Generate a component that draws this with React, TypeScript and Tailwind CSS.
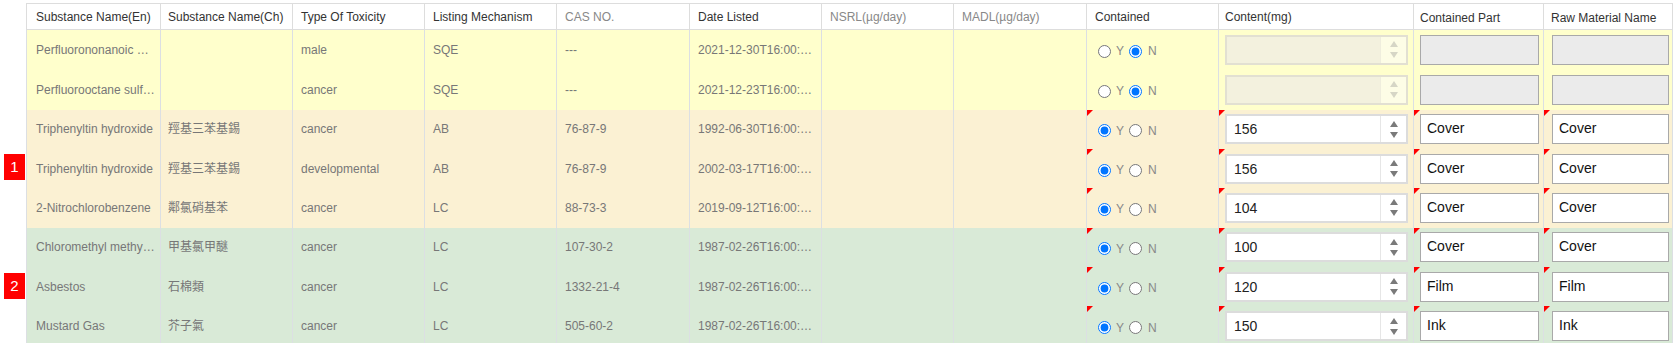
import React from 'react';

type Group = 'yellow' | 'orange' | 'green';

interface Row {
  en: string;
  ch: string;
  type: string;
  mech: string;
  cas: string;
  date: string;
  contained: boolean;
  content: string;
  part: string;
  raw: string;
  group: Group;
}

const rows: Row[] = [
  { en: 'Perfluorononanoic …', ch: '', type: 'male', mech: 'SQE', cas: '---', date: '2021-12-30T16:00:…', contained: false, content: '', part: '', raw: '', group: 'yellow' },
  { en: 'Perfluorooctane sulf…', ch: '', type: 'cancer', mech: 'SQE', cas: '---', date: '2021-12-23T16:00:…', contained: false, content: '', part: '', raw: '', group: 'yellow' },
  { en: 'Triphenyltin hydroxide', ch: '羥基三苯基錫', type: 'cancer', mech: 'AB', cas: '76-87-9', date: '1992-06-30T16:00:…', contained: true, content: '156', part: 'Cover', raw: 'Cover', group: 'orange' },
  { en: 'Triphenyltin hydroxide', ch: '羥基三苯基錫', type: 'developmental', mech: 'AB', cas: '76-87-9', date: '2002-03-17T16:00:…', contained: true, content: '156', part: 'Cover', raw: 'Cover', group: 'orange' },
  { en: '2-Nitrochlorobenzene', ch: '鄰氯硝基苯', type: 'cancer', mech: 'LC', cas: '88-73-3', date: '2019-09-12T16:00:…', contained: true, content: '104', part: 'Cover', raw: 'Cover', group: 'orange' },
  { en: 'Chloromethyl methy…', ch: '甲基氯甲醚', type: 'cancer', mech: 'LC', cas: '107-30-2', date: '1987-02-26T16:00:…', contained: true, content: '100', part: 'Cover', raw: 'Cover', group: 'green' },
  { en: 'Asbestos', ch: '石棉類', type: 'cancer', mech: 'LC', cas: '1332-21-4', date: '1987-02-26T16:00:…', contained: true, content: '120', part: 'Film', raw: 'Film', group: 'green' },
  { en: 'Mustard Gas', ch: '芥子氣', type: 'cancer', mech: 'LC', cas: '505-60-2', date: '1987-02-26T16:00:…', contained: true, content: '150', part: 'Ink', raw: 'Ink', group: 'green' },
];

const headers = [
  { label: 'Substance Name(En)', muted: false, pad: 'pl-[9px]' },
  { label: 'Substance Name(Ch)', muted: false, pad: 'pl-[7px]' },
  { label: 'Type Of Toxicity', muted: false, pad: 'pl-2' },
  { label: 'Listing Mechanism', muted: false, pad: 'pl-2' },
  { label: 'CAS NO.', muted: true, pad: 'pl-2' },
  { label: 'Date Listed', muted: false, pad: 'pl-2' },
  { label: 'NSRL(µg/day)', muted: true, pad: 'pl-2' },
  { label: 'MADL(µg/day)', muted: true, pad: 'pl-2' },
  { label: 'Contained', muted: false, pad: 'pl-2' },
  { label: 'Content(mg)', muted: false, pad: 'pl-[6px]' },
  { label: 'Contained Part', muted: false, pad: 'pl-[6px] pt-[2px]' },
  { label: 'Raw Material Name', muted: false, pad: 'pl-[7px] pt-[2px]' },
];

const widths = [134, 132, 132, 132, 133, 132, 132, 133, 132, 195, 130, 129];

const rowBg: Record<Group, string> = {
  yellow: 'bg-[#ffffcc] h-[40px]',
  orange: 'bg-[#fbf1d3] h-[39.4px]',
  green: 'bg-[#d9ead7] h-[39.4px]',
};

const Flag = () => (
  <span className="absolute left-0 top-0 w-0 h-0 border-t-[6px] border-r-[6px] border-t-[#ff0000] border-r-transparent" />
);

const Arrow = ({ up, color }: { up: boolean; color: string }) => (
  <svg width="8" height="6" viewBox="0 0 8 6">
    <path d={up ? 'M4 0L8 6H0Z' : 'M0 0H8L4 6Z'} fill={color} />
  </svg>
);

const NumberBox = ({ value, disabled }: { value: string; disabled: boolean }) => (
  <div
    className={`flex h-[30px] w-[183px] border-2 ${
      disabled ? 'border-[#e2e0d2] bg-[#f3f1de]' : 'border-[#dcdcdc] bg-white'
    }`}
  >
    <span className="flex-1 pl-[7px] text-[14px] leading-[26px] text-[#222]">{value}</span>
    <span
      className={`flex w-[26px] flex-col items-center justify-center gap-[5px] border-l ${
        disabled ? 'border-[#efeedd] bg-[#fdfde6]' : 'border-[#e6e6e6] bg-white'
      }`}
    >
      <Arrow up color={disabled ? '#d6d6c6' : '#7a7a7a'} />
      <Arrow up={false} color={disabled ? '#d6d6c6' : '#7a7a7a'} />
    </span>
  </div>
);

const TextBox = ({ value, disabled, width }: { value: string; disabled: boolean; width: string }) => (
  <div
    className={`h-[30px] ${width} border border-[#a9a9a9] pl-[6px] text-[14px] leading-[27px] text-[#111] ${
      disabled ? 'bg-[#ebebeb]' : 'bg-white'
    }`}
  >
    {value}
  </div>
);

const Radio = ({ checked }: { checked: boolean }) => (
  <input type="radio" checked={checked} readOnly className="m-0 h-[13px] w-[13px] accent-[#0075ff]" />
);

const Badge = ({ n, top }: { n: string; top: string }) => (
  <div
    className={`absolute left-[4px] ${top} flex h-[26px] w-[21px] items-center justify-center bg-[#ff0000] text-[15px] text-white`}
  >
    {n}
  </div>
);

export default function App() {
  const cell = 'border-x border-[#dcdfe3] whitespace-nowrap overflow-hidden text-[#777]';
  return (
    <div className="relative h-[343px] w-[1678px] overflow-hidden bg-white pl-[26px] pt-[3px] font-['Liberation_Sans','Noto_Sans_CJK_TC',sans-serif] text-[12px]">
      <Badge n="1" top="top-[154px]" />
      <Badge n="2" top="top-[273px]" />
      <table className="w-[1646px] table-fixed border-collapse">
        <colgroup>
          {widths.map((w, i) => (
            <col key={i} style={{ width: w }} />
          ))}
        </colgroup>
        <thead>
          <tr className="h-[26px] bg-white">
            {headers.map((h) => (
              <th
                key={h.label}
                className={`border border-[#dddddd] text-left font-normal whitespace-nowrap ${h.pad} ${
                  h.muted ? 'text-[#888]' : 'text-[#333]'
                }`}
              >
                {h.label}
              </th>
            ))}
          </tr>
        </thead>
        <tbody>
          {rows.map((r, i) => {
            const off = r.group === 'yellow';
            return (
              <tr key={i} className={rowBg[r.group]}>
                <td className={`${cell} pl-[9px]`}>{r.en}</td>
                <td className={`${cell} pl-[7px]`}>{r.ch}</td>
                <td className={`${cell} pl-2`}>{r.type}</td>
                <td className={`${cell} pl-2`}>{r.mech}</td>
                <td className={`${cell} pl-2`}>{r.cas}</td>
                <td className={`${cell} pl-2`}>{r.date}</td>
                <td className={cell}></td>
                <td className={cell}></td>
                <td className={`${cell} relative pl-[11px]`}>
                  {!off && <Flag />}
                  <div className="flex items-center pt-[3px]">
                    <Radio checked={r.contained} />
                    <span className="ml-[5px] mr-[5px] text-[#888]">Y</span>
                    <Radio checked={!r.contained} />
                    <span className="ml-[6px] text-[#888]">N</span>
                  </div>
                </td>
                <td className={`${cell} relative pl-[6px]`}>
                  {!off && <Flag />}
                  <NumberBox value={r.content} disabled={off} />
                </td>
                <td className={`${cell} relative pl-[6px]`}>
                  {!off && <Flag />}
                  <TextBox value={r.part} disabled={off} width="w-[119px]" />
                </td>
                <td className={`${cell} relative pl-[8px]`}>
                  {!off && <Flag />}
                  <TextBox value={r.raw} disabled={off} width="w-[117px]" />
                </td>
              </tr>
            );
          })}
        </tbody>
      </table>
    </div>
  );
}
